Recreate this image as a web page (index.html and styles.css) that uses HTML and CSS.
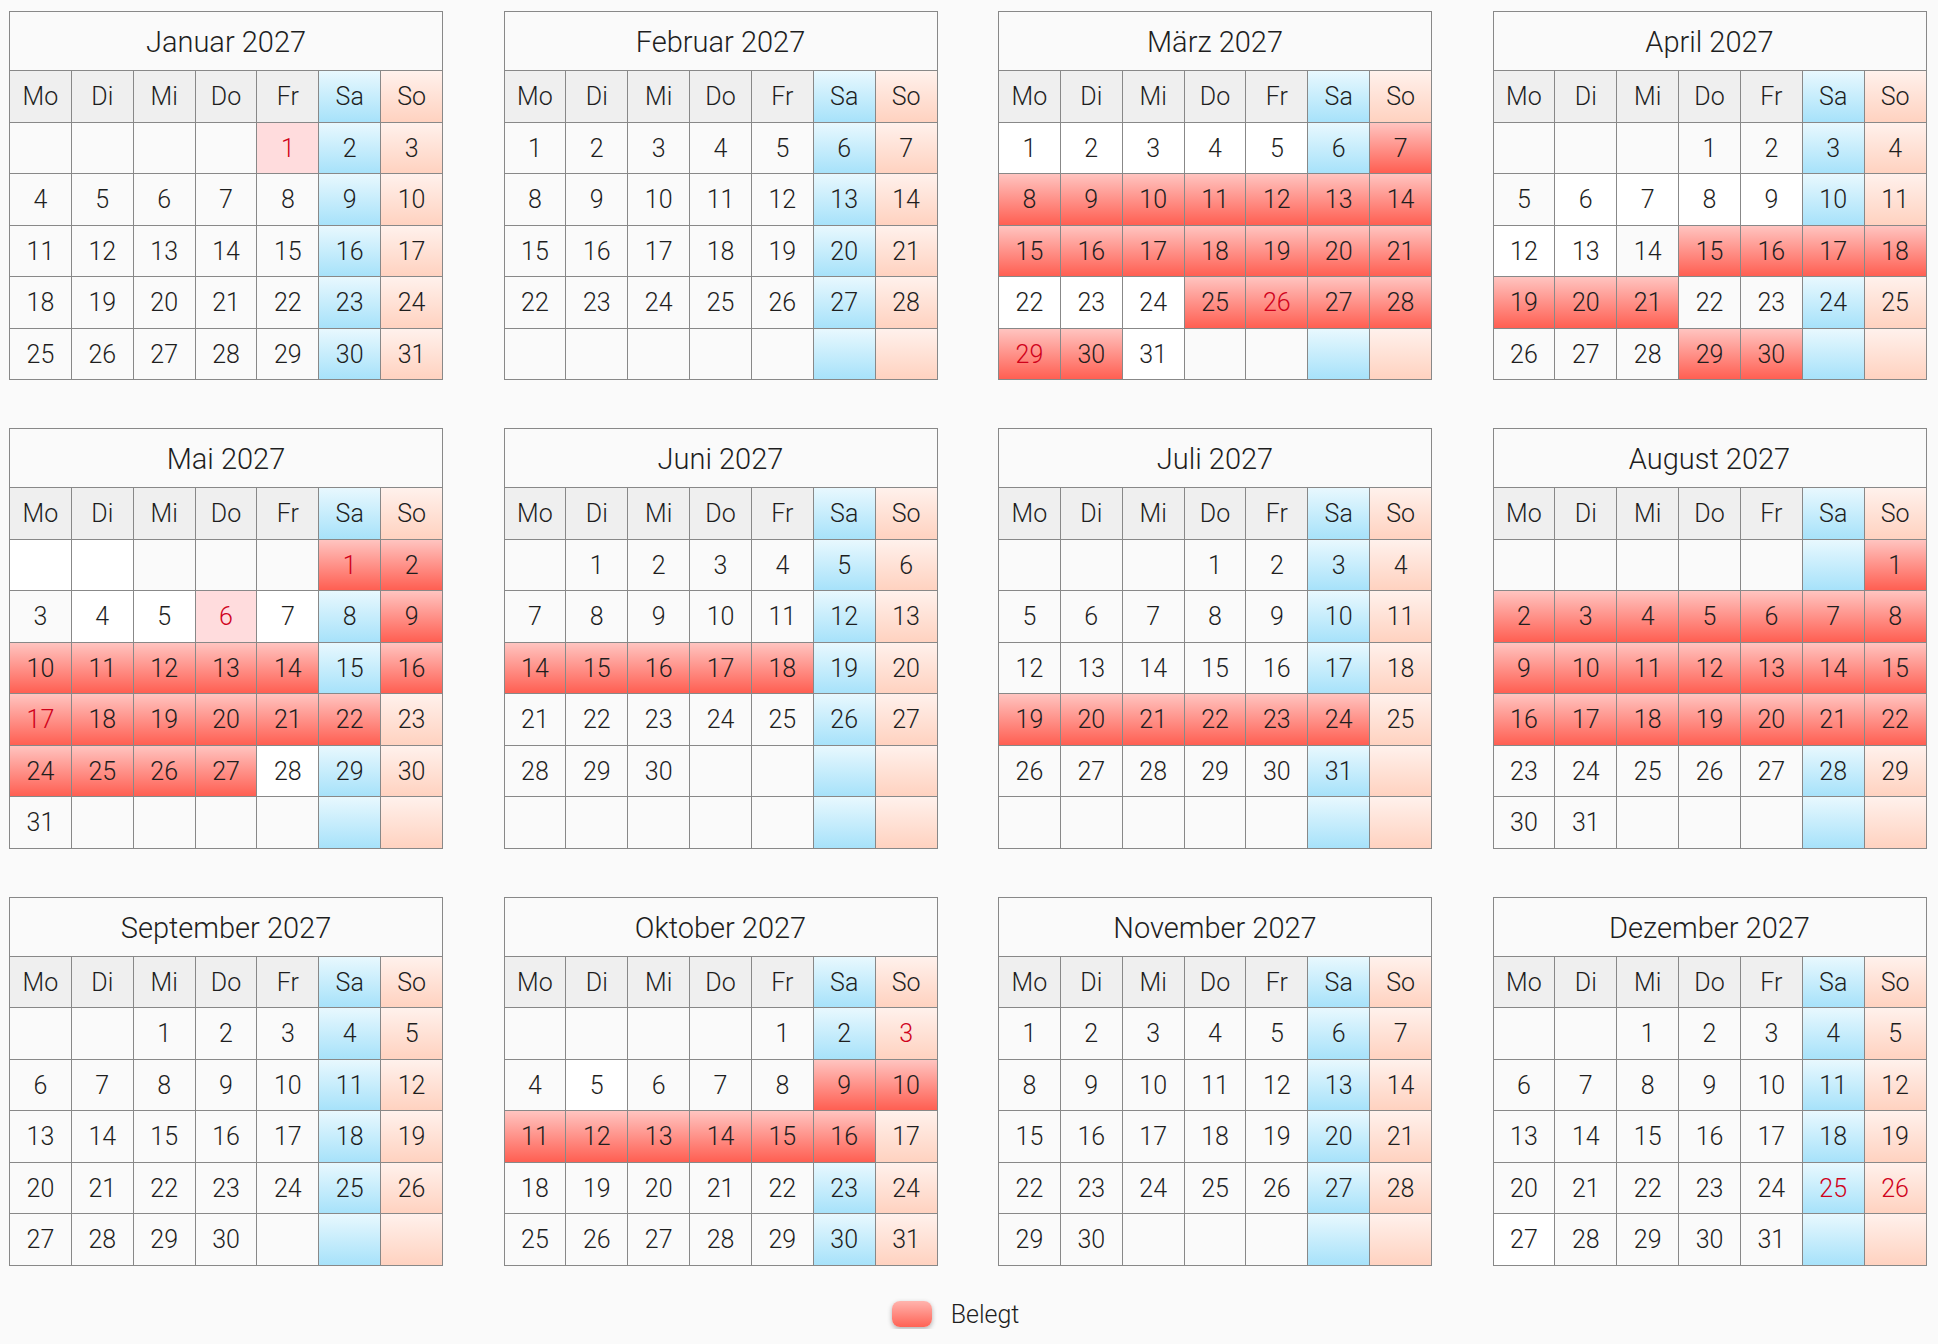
FILE: index.html
```html
<!DOCTYPE html>
<html lang="de">
<head>
<meta charset="utf-8">
<title>Belegungskalender 2027</title>
<link rel="stylesheet" href="styles.css">
</head>
<body>
<main class="page">
<section class="year">

<div class="cal">
<div class="t">Januar 2027</div>
<div class="wd">Mo</div><div class="wd">Di</div><div class="wd">Mi</div><div class="wd">Do</div><div class="wd">Fr</div><div class="wd">Sa</div><div class="wd">So</div>
<div></div><div></div><div></div><div></div><div class="h r">1</div><div>2</div><div>3</div>
<div>4</div><div>5</div><div>6</div><div>7</div><div>8</div><div>9</div><div>10</div>
<div>11</div><div>12</div><div>13</div><div>14</div><div>15</div><div>16</div><div>17</div>
<div>18</div><div>19</div><div>20</div><div>21</div><div>22</div><div>23</div><div>24</div>
<div>25</div><div>26</div><div>27</div><div>28</div><div>29</div><div>30</div><div>31</div>
</div>

<div class="cal">
<div class="t">Februar 2027</div>
<div class="wd">Mo</div><div class="wd">Di</div><div class="wd">Mi</div><div class="wd">Do</div><div class="wd">Fr</div><div class="wd">Sa</div><div class="wd">So</div>
<div>1</div><div>2</div><div>3</div><div>4</div><div>5</div><div>6</div><div>7</div>
<div>8</div><div>9</div><div>10</div><div>11</div><div>12</div><div>13</div><div>14</div>
<div>15</div><div>16</div><div>17</div><div>18</div><div>19</div><div>20</div><div>21</div>
<div>22</div><div>23</div><div>24</div><div>25</div><div>26</div><div>27</div><div>28</div>
<div></div><div></div><div></div><div></div><div></div><div></div><div></div>
</div>

<div class="cal">
<div class="t">März 2027</div>
<div class="wd">Mo</div><div class="wd">Di</div><div class="wd">Mi</div><div class="wd">Do</div><div class="wd">Fr</div><div class="wd">Sa</div><div class="wd">So</div>
<div class="w">1</div><div class="w">2</div><div class="w">3</div><div class="w">4</div><div class="w">5</div><div>6</div><div class="b">7</div>
<div class="b">8</div><div class="b">9</div><div class="b">10</div><div class="b">11</div><div class="b">12</div><div class="b">13</div><div class="b">14</div>
<div class="b">15</div><div class="b">16</div><div class="b">17</div><div class="b">18</div><div class="b">19</div><div class="b">20</div><div class="b">21</div>
<div class="w">22</div><div class="w">23</div><div class="w">24</div><div class="b">25</div><div class="b r">26</div><div class="b">27</div><div class="b">28</div>
<div class="b r">29</div><div class="b">30</div><div class="w">31</div><div></div><div></div><div></div><div></div>
</div>

<div class="cal">
<div class="t">April 2027</div>
<div class="wd">Mo</div><div class="wd">Di</div><div class="wd">Mi</div><div class="wd">Do</div><div class="wd">Fr</div><div class="wd">Sa</div><div class="wd">So</div>
<div></div><div></div><div></div><div>1</div><div>2</div><div>3</div><div>4</div>
<div>5</div><div class="w">6</div><div class="w">7</div><div class="w">8</div><div class="w">9</div><div>10</div><div>11</div>
<div class="w">12</div><div class="w">13</div><div>14</div><div class="b">15</div><div class="b">16</div><div class="b">17</div><div class="b">18</div>
<div class="b">19</div><div class="b">20</div><div class="b">21</div><div>22</div><div>23</div><div>24</div><div>25</div>
<div>26</div><div>27</div><div>28</div><div class="b">29</div><div class="b">30</div><div></div><div></div>
</div>

<div class="cal">
<div class="t">Mai 2027</div>
<div class="wd">Mo</div><div class="wd">Di</div><div class="wd">Mi</div><div class="wd">Do</div><div class="wd">Fr</div><div class="wd">Sa</div><div class="wd">So</div>
<div class="w"></div><div class="w"></div><div></div><div></div><div></div><div class="b r">1</div><div class="b">2</div>
<div>3</div><div class="w">4</div><div class="w">5</div><div class="h r">6</div><div class="w">7</div><div>8</div><div class="b">9</div>
<div class="b">10</div><div class="b">11</div><div class="b">12</div><div class="b">13</div><div class="b">14</div><div>15</div><div class="b">16</div>
<div class="b r">17</div><div class="b">18</div><div class="b">19</div><div class="b">20</div><div class="b">21</div><div class="b">22</div><div>23</div>
<div class="b">24</div><div class="b">25</div><div class="b">26</div><div class="b">27</div><div class="w">28</div><div>29</div><div>30</div>
<div>31</div><div></div><div></div><div></div><div></div><div></div><div></div>
</div>

<div class="cal">
<div class="t">Juni 2027</div>
<div class="wd">Mo</div><div class="wd">Di</div><div class="wd">Mi</div><div class="wd">Do</div><div class="wd">Fr</div><div class="wd">Sa</div><div class="wd">So</div>
<div></div><div>1</div><div>2</div><div>3</div><div>4</div><div>5</div><div>6</div>
<div>7</div><div>8</div><div>9</div><div>10</div><div>11</div><div>12</div><div>13</div>
<div class="b">14</div><div class="b">15</div><div class="b">16</div><div class="b">17</div><div class="b">18</div><div>19</div><div>20</div>
<div>21</div><div>22</div><div>23</div><div>24</div><div>25</div><div>26</div><div>27</div>
<div>28</div><div>29</div><div>30</div><div></div><div></div><div></div><div></div>
<div></div><div></div><div></div><div></div><div></div><div></div><div></div>
</div>

<div class="cal">
<div class="t">Juli 2027</div>
<div class="wd">Mo</div><div class="wd">Di</div><div class="wd">Mi</div><div class="wd">Do</div><div class="wd">Fr</div><div class="wd">Sa</div><div class="wd">So</div>
<div></div><div></div><div></div><div>1</div><div>2</div><div>3</div><div>4</div>
<div>5</div><div>6</div><div>7</div><div>8</div><div>9</div><div>10</div><div>11</div>
<div>12</div><div>13</div><div>14</div><div>15</div><div>16</div><div>17</div><div>18</div>
<div class="b">19</div><div class="b">20</div><div class="b">21</div><div class="b">22</div><div class="b">23</div><div class="b">24</div><div>25</div>
<div>26</div><div>27</div><div>28</div><div>29</div><div>30</div><div>31</div><div></div>
<div></div><div></div><div></div><div></div><div></div><div></div><div></div>
</div>

<div class="cal">
<div class="t">August 2027</div>
<div class="wd">Mo</div><div class="wd">Di</div><div class="wd">Mi</div><div class="wd">Do</div><div class="wd">Fr</div><div class="wd">Sa</div><div class="wd">So</div>
<div></div><div></div><div></div><div></div><div></div><div></div><div class="b">1</div>
<div class="b">2</div><div class="b">3</div><div class="b">4</div><div class="b">5</div><div class="b">6</div><div class="b">7</div><div class="b">8</div>
<div class="b">9</div><div class="b">10</div><div class="b">11</div><div class="b">12</div><div class="b">13</div><div class="b">14</div><div class="b">15</div>
<div class="b">16</div><div class="b">17</div><div class="b">18</div><div class="b">19</div><div class="b">20</div><div class="b">21</div><div class="b">22</div>
<div>23</div><div>24</div><div>25</div><div>26</div><div>27</div><div>28</div><div>29</div>
<div>30</div><div>31</div><div></div><div></div><div></div><div></div><div></div>
</div>

<div class="cal">
<div class="t">September 2027</div>
<div class="wd">Mo</div><div class="wd">Di</div><div class="wd">Mi</div><div class="wd">Do</div><div class="wd">Fr</div><div class="wd">Sa</div><div class="wd">So</div>
<div></div><div></div><div>1</div><div>2</div><div>3</div><div>4</div><div>5</div>
<div>6</div><div>7</div><div>8</div><div>9</div><div>10</div><div>11</div><div>12</div>
<div>13</div><div>14</div><div>15</div><div>16</div><div>17</div><div>18</div><div>19</div>
<div>20</div><div>21</div><div>22</div><div>23</div><div>24</div><div>25</div><div>26</div>
<div>27</div><div>28</div><div>29</div><div>30</div><div></div><div></div><div></div>
</div>

<div class="cal">
<div class="t">Oktober 2027</div>
<div class="wd">Mo</div><div class="wd">Di</div><div class="wd">Mi</div><div class="wd">Do</div><div class="wd">Fr</div><div class="wd">Sa</div><div class="wd">So</div>
<div></div><div></div><div></div><div></div><div>1</div><div>2</div><div class="r">3</div>
<div>4</div><div class="w">5</div><div>6</div><div>7</div><div>8</div><div class="b">9</div><div class="b">10</div>
<div class="b">11</div><div class="b">12</div><div class="b">13</div><div class="b">14</div><div class="b">15</div><div class="b">16</div><div>17</div>
<div>18</div><div>19</div><div>20</div><div>21</div><div>22</div><div>23</div><div>24</div>
<div>25</div><div>26</div><div>27</div><div>28</div><div>29</div><div>30</div><div>31</div>
</div>

<div class="cal">
<div class="t">November 2027</div>
<div class="wd">Mo</div><div class="wd">Di</div><div class="wd">Mi</div><div class="wd">Do</div><div class="wd">Fr</div><div class="wd">Sa</div><div class="wd">So</div>
<div>1</div><div>2</div><div>3</div><div>4</div><div>5</div><div>6</div><div>7</div>
<div>8</div><div>9</div><div>10</div><div>11</div><div>12</div><div>13</div><div>14</div>
<div>15</div><div>16</div><div>17</div><div>18</div><div>19</div><div>20</div><div>21</div>
<div>22</div><div>23</div><div>24</div><div>25</div><div>26</div><div>27</div><div>28</div>
<div>29</div><div>30</div><div></div><div></div><div></div><div></div><div></div>
</div>

<div class="cal">
<div class="t">Dezember 2027</div>
<div class="wd">Mo</div><div class="wd">Di</div><div class="wd">Mi</div><div class="wd">Do</div><div class="wd">Fr</div><div class="wd">Sa</div><div class="wd">So</div>
<div></div><div></div><div>1</div><div>2</div><div>3</div><div>4</div><div>5</div>
<div>6</div><div>7</div><div>8</div><div>9</div><div>10</div><div>11</div><div>12</div>
<div>13</div><div>14</div><div>15</div><div>16</div><div>17</div><div>18</div><div>19</div>
<div>20</div><div>21</div><div>22</div><div>23</div><div>24</div><div class="r">25</div><div class="r">26</div>
<div class="w">27</div><div>28</div><div>29</div><div>30</div><div>31</div><div></div><div></div>
</div>

</section>
<footer class="legend">
<span class="swatch"></span>
<span class="legend-label">Belegt</span>
</footer>
</main>
</body>
</html>
```

FILE: styles.css
```css
html, body {
  margin: 0;
  padding: 0;
  background: #fafafa;
}

body {
  font-family: Roboto, "Helvetica Neue", "Liberation Sans", sans-serif;
  font-weight: 300;
  color: #1e1e1e;
}

.page {
  padding: 11px 0 0 9px;
}

.year {
  display: grid;
  grid-template-columns: repeat(4, 434px);
  column-gap: 60.5px;
  row-gap: 48px;
  align-items: start;
}

.cal {
  display: grid;
  grid-template-columns: repeat(7, 1fr);
  grid-template-rows: 59px;
  grid-auto-rows: 51.5px;
  width: 434px;
  box-sizing: border-box;
  border-left: 1px solid #888;
  border-top: 1px solid #888;
}

.cal > div {
  box-sizing: border-box;
  border-right: 1px solid #888;
  border-bottom: 1px solid #888;
  background: #fafafa;
  display: flex;
  align-items: center;
  justify-content: center;
  padding-top: 1px;
  font-size: 25px;
  line-height: 1;
}

.cal > .t {
  grid-column: 1 / -1;
  font-size: 29px;
  padding-top: 3px;
  background: #fafafa;
}

.cal > .wd {
  background: #efefef;
}

.cal > div:nth-child(7n) {
  background: linear-gradient(#e8f8fe, #a7e2fa);
}

.cal > div:nth-child(7n+8) {
  background: linear-gradient(#fff1ec, #ffd2c0);
}

.cal > div.w {
  background: #ffffff;
}

.cal > div.h {
  background: #ffdcdd;
}

.cal > div.b {
  background: linear-gradient(#ffc4c0, #ff5f52);
}

.cal > div.r {
  color: #d0021b;
}

.legend {
  display: flex;
  justify-content: center;
  align-items: center;
  gap: 19px;
  margin-top: 34px;
  padding-right: 36px;
}

.swatch {
  width: 40px;
  height: 26px;
  border-radius: 8px;
  background: linear-gradient(#ffb4ae, #ff6355);
  box-shadow: 0 2px 5px rgba(0, 0, 0, 0.3);
}

.legend-label {
  font-size: 25px;
  color: #1e1e1e;
}
```
